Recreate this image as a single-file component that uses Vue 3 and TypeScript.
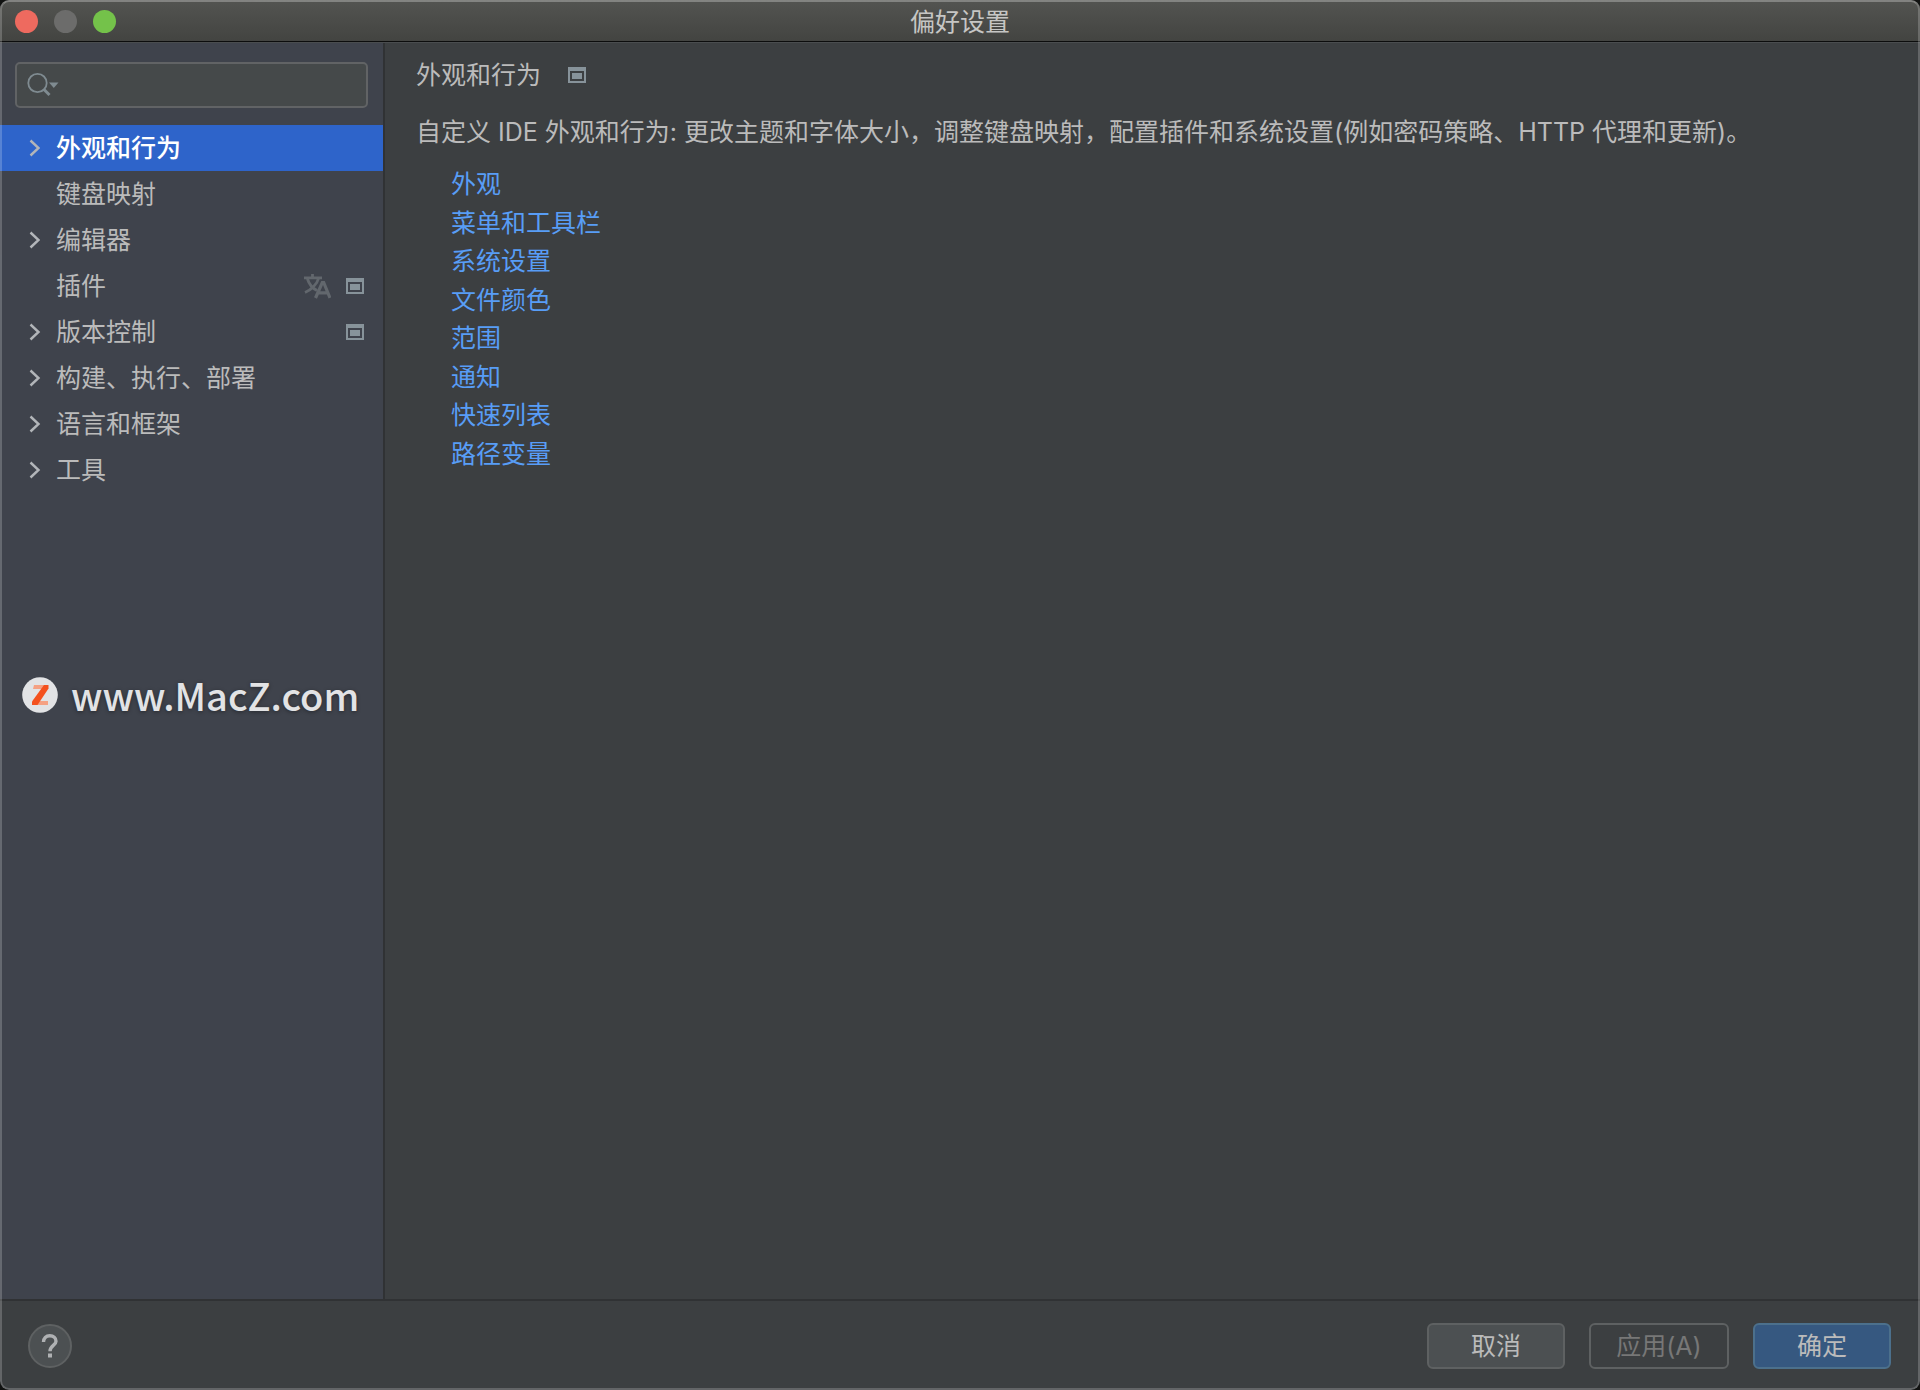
<script setup lang="ts">
import { ref } from 'vue'

interface TreeItem {
  label: string
  expandable: boolean
  translate?: boolean
  project?: boolean
}

const items: TreeItem[] = [
  { label: '外观和行为', expandable: true },
  { label: '键盘映射', expandable: false },
  { label: '编辑器', expandable: true },
  { label: '插件', expandable: false, translate: true, project: true },
  { label: '版本控制', expandable: true, project: true },
  { label: '构建、执行、部署', expandable: true },
  { label: '语言和框架', expandable: true },
  { label: '工具', expandable: true },
]

const links: string[] = ['外观', '菜单和工具栏', '系统设置', '文件颜色', '范围', '通知', '快速列表', '路径变量']

const selected = ref(0)
const query = ref('')
</script>

<template>
  <div class="desktop">
    <div class="window">
      <header class="titlebar">
        <div class="lights">
          <button class="light close" type="button" aria-label="关闭"></button>
          <button class="light minimize" type="button" aria-label="最小化" disabled></button>
          <button class="light maximize" type="button" aria-label="缩放"></button>
        </div>
        <h1 class="window-title">偏好设置</h1>
      </header>

      <div class="body">
        <aside class="sidebar">
          <label class="search">
            <svg class="search-icon" width="34" height="26" viewBox="0 0 34 26" aria-hidden="true">
              <circle cx="11.5" cy="11" r="9.2" fill="none" stroke="#7f8b91" stroke-width="1.8" />
              <path d="M17.5 17L23.5 23" stroke="#7f8b91" stroke-width="3" />
              <path d="M23 10.5h9.5l-4.7 5.5z" fill="#7f8b91" />
            </svg>
            <input v-model="query" class="search-input" type="text" aria-label="搜索" />
          </label>

          <nav class="tree">
            <button
              v-for="(item, i) in items"
              :key="item.label"
              type="button"
              class="row"
              :class="{ selected: i === selected }"
              @click="selected = i"
            >
              <span class="arrow">
                <svg v-if="item.expandable" width="12" height="18" viewBox="0 0 12 18" aria-hidden="true">
                  <path d="M1.5 1.5L9.5 9L1.5 16.5" fill="none" stroke="currentColor" stroke-width="2.4" />
                </svg>
              </span>
              <span class="label">{{ item.label }}</span>
              <svg v-if="item.translate" class="translate" width="28" height="26" viewBox="0 0 28 26" aria-hidden="true">
                <g fill="none" stroke="#62676d" stroke-width="2.8">
                  <path d="M1 4.8H19M9.5 1V4.8M4.5 6C6 11 10 15.5 14 17.5M15.5 5.5C14 11.5 8 17 2 19.5" />
                  <path d="M12.5 25L19.3 9.5H20.7L27 25M15 19.8H25" stroke-width="3.2" />
                </g>
              </svg>
              <svg v-if="item.project" class="project" width="18" height="16" viewBox="0 0 18 16" aria-hidden="true">
                <path fill="#87939a" fill-rule="evenodd" d="M0 0H18V16H0zM2 4V14H16V4zM4 6H14V12H4z" />
              </svg>
            </button>
          </nav>
        </aside>

        <main class="content">
          <div class="heading">
            <h2 class="heading-text">外观和行为</h2>
            <svg width="18" height="16" viewBox="0 0 18 16" aria-hidden="true">
              <path fill="#87939a" fill-rule="evenodd" d="M0 0H18V16H0zM2 4V14H16V4zM4 6H14V12H4z" />
            </svg>
          </div>
          <p class="description">自定义 IDE 外观和行为: 更改主题和字体大小，调整键盘映射，配置插件和系统设置(例如密码策略、HTTP 代理和更新)。</p>
          <ul class="links">
            <li v-for="link in links" :key="link"><a href="#">{{ link }}</a></li>
          </ul>
        </main>
      </div>

      <footer class="footer">
        <button class="help" type="button" aria-label="帮助">
          <svg width="18" height="24" viewBox="0 0 18 24" aria-hidden="true">
            <path d="M2.5 8C2.5 4 5 1.8 8.8 1.8C12.5 1.8 15 4 15 7.2C15 11.5 9 11.5 9 17.2" fill="none" stroke="#afb1b3" stroke-width="3.4" />
            <path d="M7 19.5h4v4h-4z" fill="#afb1b3" />
          </svg>
        </button>
        <div class="actions">
          <button class="btn" type="button">取消</button>
          <button class="btn apply" type="button" disabled>应用(A)</button>
          <button class="btn primary" type="button">确定</button>
        </div>
      </footer>

      <div class="watermark">
        <svg width="36" height="36" viewBox="0 0 36 36" aria-hidden="true">
          <circle cx="18" cy="18" r="17.8" fill="#e2e3e5" />
          <path d="M12 8H24V12H11zM14 24H26V28H13z" fill="#f5a183" />
          <path d="M22 8H26.5V11.5L15.5 28H10V24.5z" fill="#f4511e" />
        </svg>
        <span>www.MacZ.com</span>
      </div>
    </div>
  </div>
</template>

<style>
body {
  margin: 0;
  background: #111211;
}
</style>

<style scoped>
.desktop {
  font-family: Inter, 'Noto Sans CJK SC', sans-serif;
  font-size: 25px;
  line-height: 38px;
  color: #bbbbbb;
}

.window {
  position: relative;
  display: flex;
  flex-direction: column;
  min-height: 100vh;
  border-radius: 9px;
  overflow: hidden;
  background: #3c3f41;
}

.window::after {
  content: '';
  position: absolute;
  inset: 0;
  z-index: 2;
  border: 2px solid rgba(255, 255, 255, 0.2);
  border-top-color: rgba(255, 255, 255, 0.28);
  border-radius: 9px;
  pointer-events: none;
}

button {
  font: inherit;
  color: inherit;
  margin: 0;
  padding: 0;
  border: 0;
  background: none;
}

.titlebar {
  display: grid;
  grid-template-columns: 1fr auto 1fr;
  align-items: center;
  height: 39px;
  padding: 2px 15px 0;
  background: linear-gradient(#535451, #434441);
  border-bottom: 1px solid #0c0d0d;
  box-shadow: 0 1px 0 #4a4d4f;
  z-index: 1;
}

.lights {
  display: flex;
  gap: 16px;
}

.light {
  width: 23px;
  height: 23px;
  border-radius: 50%;
}

.close {
  background: #ee6a5f;
}

.minimize {
  background: #6c6c6b;
}

.maximize {
  background: #74c24a;
}

.window-title {
  margin: 0;
  font-size: 25px;
  font-weight: 400;
  color: #c6c6c4;
}

.body {
  flex: 1;
  display: flex;
}

.sidebar {
  width: 383px;
  flex: none;
  background: #3f434c;
  border-right: 2px solid #303234;
}

.search {
  display: flex;
  align-items: center;
  height: 46px;
  margin: 20px 15px 17px;
  padding: 0 9px;
  box-sizing: border-box;
  border: 2px solid #616365;
  border-radius: 5px;
  background: #45494a;
}

.search-icon {
  flex: none;
}

.search-input {
  flex: 1;
  min-width: 0;
  border: 0;
  outline: 0;
  background: none;
  font: inherit;
  color: inherit;
}

.tree {
  display: flex;
  flex-direction: column;
}

.row {
  display: flex;
  align-items: center;
  height: 46px;
  padding: 0 19px 0 29px;
  text-align: left;
}

.row.selected {
  background: #2e64ca;
  color: #ffffff;
  font-weight: 500;
}

.arrow {
  display: flex;
  width: 27px;
  color: #b2b5b9;
}

.label {
  flex: 1;
}

.translate {
  margin-right: 15px;
}

.content {
  flex: 1;
  min-width: 0;
  padding: 14px 31px;
}

.heading {
  display: flex;
  align-items: center;
  gap: 27px;
}

.heading-text {
  margin: 0;
  font-size: 25px;
  font-weight: 400;
}

.description {
  margin: 19px 0 14px;
}

.links {
  display: grid;
  grid-auto-rows: 1fr;
  min-height: 308px;
  margin: 0;
  padding: 0 0 0 35px;
  list-style: none;
}

.links a {
  color: #589df6;
  text-decoration: none;
}

.footer {
  display: flex;
  align-items: center;
  justify-content: space-between;
  padding: 22px 29px 21px 28px;
  border-top: 2px solid #303234;
}

.help {
  display: flex;
  align-items: center;
  justify-content: center;
  width: 44px;
  height: 44px;
  box-sizing: border-box;
  border: 2px solid #5e6162;
  border-radius: 50%;
  background: #4c5052;
}

.actions {
  display: flex;
  gap: 24px;
}

.btn {
  width: 138px;
  height: 46px;
  box-sizing: border-box;
  border: 2px solid #5e6162;
  border-radius: 6px;
  background: #4c5052;
}

.btn.apply {
  width: 140px;
}

.btn:disabled {
  background: none;
  color: #777777;
}

.btn.primary {
  border-color: #4c708c;
  background: #365880;
}

.watermark {
  position: absolute;
  left: 22px;
  top: 677px;
  display: flex;
  gap: 13px;
  font-family: 'Noto Sans CJK SC', sans-serif;
  font-size: 38px;
  line-height: 36px;
  font-weight: 500;
  color: #e2e3e5;
  text-shadow: 0 1px 4px rgba(0, 0, 0, 0.4);
}
</style>
